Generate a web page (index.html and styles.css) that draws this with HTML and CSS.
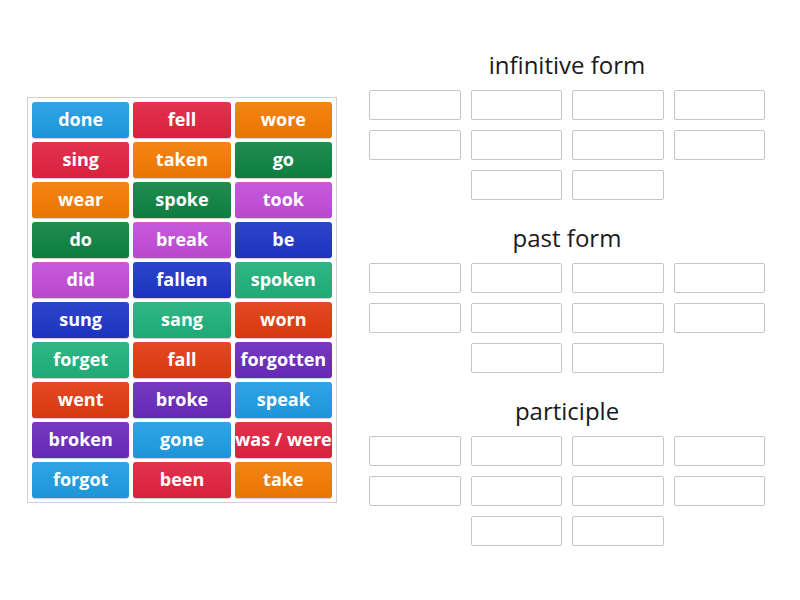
FILE: index.html
```html
<!DOCTYPE html>
<html lang="en">
<head>
    <meta charset="UTF-8">
    <title>Group sort</title>
    <link rel="stylesheet" href="styles.css">
</head>
<body>
    <div class="jogo">
        <div class="pecas">
            <div class="peca azul">done</div>
            <div class="peca vermelho">fell</div>
            <div class="peca laranja">wore</div>

            <div class="peca vermelho">sing</div>
            <div class="peca laranja">taken</div>
            <div class="peca verde">go</div>

            <div class="peca laranja">wear</div>
            <div class="peca verde">spoke</div>
            <div class="peca rosa">took</div>

            <div class="peca verde">do</div>
            <div class="peca rosa">break</div>
            <div class="peca anil">be</div>

            <div class="peca rosa">did</div>
            <div class="peca anil">fallen</div>
            <div class="peca menta">spoken</div>

            <div class="peca anil">sung</div>
            <div class="peca menta">sang</div>
            <div class="peca tijolo">worn</div>

            <div class="peca menta">forget</div>
            <div class="peca tijolo">fall</div>
            <div class="peca roxo">forgotten</div>

            <div class="peca tijolo">went</div>
            <div class="peca roxo">broke</div>
            <div class="peca azul">speak</div>

            <div class="peca roxo">broken</div>
            <div class="peca azul">gone</div>
            <div class="peca vermelho">was / were</div>

            <div class="peca azul">forgot</div>
            <div class="peca vermelho">been</div>
            <div class="peca laranja">take</div>
        </div>

        <div class="grupos">
            <div class="grupo">
                <h2>infinitive form</h2>
                <div class="caixas">
                    <div class="caixa"></div><div class="caixa"></div><div class="caixa"></div><div class="caixa"></div>
                    <div class="caixa"></div><div class="caixa"></div><div class="caixa"></div><div class="caixa"></div>
                    <div class="caixa"></div><div class="caixa"></div>
                </div>
            </div>
            <div class="grupo">
                <h2>past form</h2>
                <div class="caixas">
                    <div class="caixa"></div><div class="caixa"></div><div class="caixa"></div><div class="caixa"></div>
                    <div class="caixa"></div><div class="caixa"></div><div class="caixa"></div><div class="caixa"></div>
                    <div class="caixa"></div><div class="caixa"></div>
                </div>
            </div>
            <div class="grupo">
                <h2>participle</h2>
                <div class="caixas">
                    <div class="caixa"></div><div class="caixa"></div><div class="caixa"></div><div class="caixa"></div>
                    <div class="caixa"></div><div class="caixa"></div><div class="caixa"></div><div class="caixa"></div>
                    <div class="caixa"></div><div class="caixa"></div>
                </div>
            </div>
        </div>
    </div>
</body>
</html>
```

FILE: styles.css
```css
* {
    margin: 0;
    padding: 0;
    box-sizing: border-box;
}

body {
    font-family: 'Open Sans', sans-serif;
    background: #fff;
    color: #222;
    width: 800px;
    height: 600px;
    overflow: hidden;
}

.jogo {
    display: flex;
    align-items: flex-start;
    padding: 46px 0 0 27px;
}

.pecas {
    margin-top: 51px;
    width: 310px;
    display: grid;
    grid-template-columns: repeat(3, 1fr);
    grid-auto-rows: 36px;
    gap: 4px;
    padding: 4px;
    border: 1px solid #d0d0d0;
}

.peca {
    display: flex;
    align-items: center;
    justify-content: center;
    color: #fff;
    font-size: 18px;
    font-weight: 700;
    border-radius: 3px;
    white-space: nowrap;
    padding-bottom: 2px;
    box-shadow: 0 1px 1px rgba(0, 0, 0, 0.2);
    background-image: linear-gradient(rgba(255, 255, 255, 0.08), rgba(0, 0, 0, 0.04));
}

.azul { background-color: #1e9ce2; }
.vermelho { background-color: #e0223f; }
.laranja { background-color: #f37a00; }
.verde { background-color: #0f8242; }
.rosa { background-color: #c24bd8; }
.anil { background-color: #1d35c6; }
.menta { background-color: #1fb07b; }
.tijolo { background-color: #e13a10; }
.roxo { background-color: #6b29bb; }

.grupos {
    margin-left: 26px;
    width: 408px;
}

.grupo {
    margin-bottom: 19px;
}

.grupo h2 {
    font-size: 24px;
    font-weight: 400;
    text-align: center;
    line-height: 38px;
    color: #1a1a1a;
    margin-bottom: 6px;
}

.caixas {
    display: flex;
    flex-wrap: wrap;
    justify-content: center;
    gap: 10px;
}

.caixa {
    width: 91.5px;
    height: 30px;
    border: 1px solid #c4c4c4;
    border-radius: 2px;
}
```
